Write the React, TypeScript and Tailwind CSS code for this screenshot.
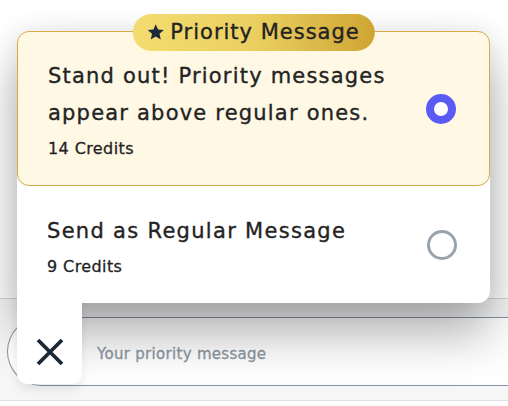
export default function App() {
  return (
    <div
      className="relative w-[508px] h-[406px] overflow-hidden bg-white flex flex-col text-[#232323]"
      style={{ fontFamily: '"DejaVu Sans", "Noto Sans", sans-serif' }}
    >
      {/* page behind the popup */}
      <div className="flex-1" />
      <div className="h-[103px] bg-[#f6f6f6] border-t border-[#d6d6d6] border-b border-b-[#e2e2e2] pt-[18px]">
        <div className="ml-[7px] h-[69px] rounded-l-full border border-r-0 border-[#8593a3] bg-white flex items-center pl-[89px] pt-[5px]">
          <span className="text-[15px] tracking-[0.3px] text-[#8d97a3] [-webkit-text-stroke:0.3px_#8d97a3]">
            Your priority message
          </span>
        </div>
      </div>
      <div className="h-[5px]" />

      {/* popup */}
      <div className="absolute left-[17px] top-[31px] w-[473px] rounded-[12px] bg-white shadow-[0_30px_50px_rgba(0,0,0,0.32),0_0_24px_rgba(0,0,0,0.08)]">
        <div className="relative h-[155px] rounded-[12px] border border-[#d3ab47] bg-[#fef8e5] pl-[30px] pr-[33px] flex items-center">
          <div className="absolute left-1/2 -translate-x-1/2 -top-[18px] h-[37px] pl-[14px] pr-[15px] rounded-full bg-gradient-to-r from-[#f4dc70] via-[#ead060] to-[#cfa532] flex items-center gap-[6px] whitespace-nowrap">
            <svg width="18" height="18" viewBox="0 0 24 24" className="-mt-[1px]">
              <path
                d="M12 1.5l3.1 7.1 7.7.7-5.8 5.1 1.7 7.6L12 18l-6.7 4 1.7-7.6-5.8-5.1 7.7-.7z"
                fill="#1d2a3a"
              />
            </svg>
            <span className="text-[21px] tracking-[1px] text-[#222] [-webkit-text-stroke:0.35px_#222]">
              Priority Message
            </span>
          </div>
          <div className="flex-1 pt-[2px]">
            <div className="text-[21px] leading-[37px] tracking-[1.2px] [-webkit-text-stroke:0.35px_#232323]">
              Stand out! Priority messages
              <br />
              appear above regular ones.
            </div>
            <div className="mt-[5px] text-[16px] tracking-[0.4px] [-webkit-text-stroke:0.3px_#232323]">14 Credits</div>
          </div>
          <div className="w-[30px] h-[30px] rounded-full border-[8px] border-[#5a5af5] bg-white" />
        </div>
        <div className="h-[117px] pl-[30px] pr-[33px] flex items-center">
          <div className="flex-1 mt-[6px]">
            <div className="text-[21px] leading-[30px] tracking-[1.3px] [-webkit-text-stroke:0.35px_#232323]">
              Send as Regular Message
            </div>
            <div className="mt-[9px] text-[16px] tracking-[0.4px] [-webkit-text-stroke:0.3px_#232323]">9 Credits</div>
          </div>
          <div className="w-[30px] h-[30px] rounded-full border-[3px] border-[#9aa3ad]" />
        </div>
      </div>

      {/* close button */}
      <div className="absolute left-[17px] top-[294px] w-[65px] h-[90px] rounded-b-[10px] bg-white flex items-center justify-center pt-[26px] shadow-[0_6px_10px_rgba(0,0,0,0.08)]">
        <svg width="30" height="30" viewBox="0 0 30 30">
          <path d="M3 3L27 27M27 3L3 27" stroke="#1d2836" strokeWidth="3.8" />
        </svg>
      </div>
    </div>
  );
}
